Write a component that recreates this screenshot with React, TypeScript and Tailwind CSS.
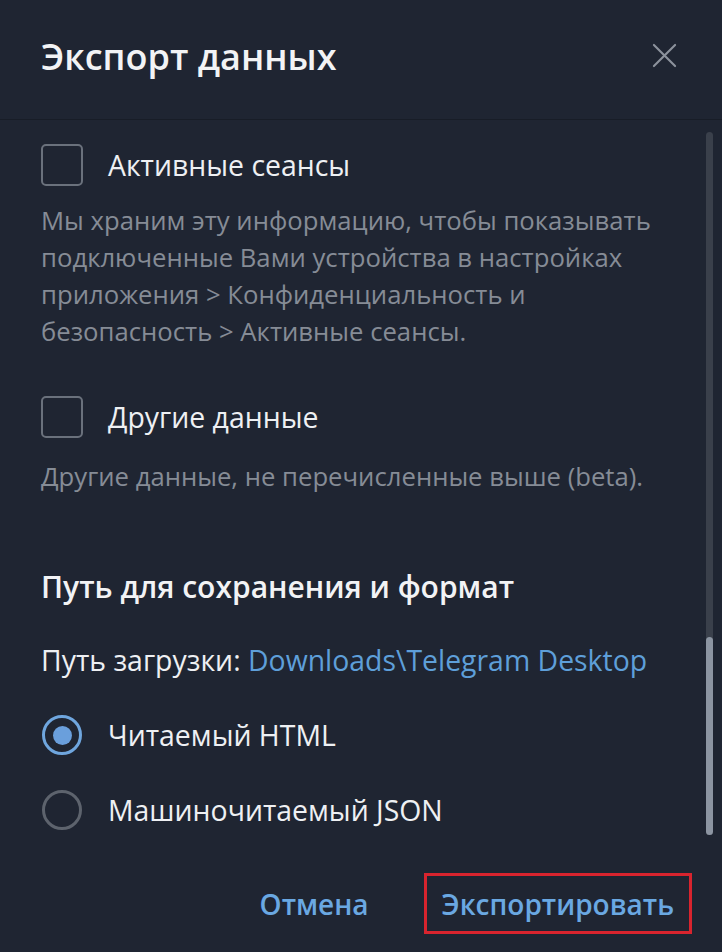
const Checkbox = ({ label }: { label: string }) => (
  <div className="flex h-[42px] items-center">
    <div className="size-[42px] shrink-0 rounded-[5px] border-2 border-[#6a717c]" />
    <span className="ml-[25px] text-[28.4px] leading-[36px] text-[#eef0f3]">{label}</span>
  </div>
);

const Radio = ({ label, checked }: { label: string; checked?: boolean }) => (
  <div className="flex h-[40px] items-center">
    <div
      className={
        checked
          ? 'flex size-[40px] shrink-0 items-center justify-center rounded-full border-[3px] border-[#6fa6de]'
          : 'flex size-[40px] shrink-0 items-center justify-center rounded-full border-[3px] border-[#5d636d]'
      }
    >
      {checked && <div className="size-[19px] rounded-full bg-[#6a9fdc]" />}
    </div>
    <span className="ml-[26px] text-[28.4px] leading-[36px] text-[#eef0f3]">{label}</span>
  </div>
);

const App = () => {
  return (
    <div
      className="h-[952px] w-[722px] overflow-hidden bg-[#1f2532]"
      style={{ fontFamily: '"Open Sans", "Noto Sans", sans-serif' }}
    >
      <header className="flex h-[120px] items-center justify-between border-b border-[#181d27] pl-[41px] pr-[45px]">
        <h1 className="-mt-[6px] text-[36px] font-semibold text-[#f2f3f5]">Экспорт данных</h1>
        <svg width="25" height="25" viewBox="0 0 26 26" className="-mt-[8px]">
          <path d="M2 2L24 24M24 2L2 24" stroke="#8c929c" strokeWidth="2.2" strokeLinecap="round" />
        </svg>
      </header>

      <div className="relative">
        <div className="absolute right-[9px] top-[12px] h-[703px] w-[7px] rounded-full bg-[#3a404b]">
          <div className="absolute bottom-0 h-[198px] w-[7px] rounded-full bg-[#8c95a2]" />
        </div>

        <div className="px-[41px] pt-[24px]">
          <Checkbox label="Активные сеансы" />
          <p className="mt-[16px] text-[25.7px] leading-[37px] text-[#868c96]">
            Мы храним эту информацию, чтобы показывать подключенные Вами устройства в настройках
            приложения &gt; Конфиденциальность и безопасность &gt; Активные сеансы.
          </p>

          <div className="mt-[46px]">
            <Checkbox label="Другие данные" />
          </div>
          <p className="mt-[20px] text-[25.7px] leading-[37px] text-[#868c96]">
            Другие данные, не перечисленные выше (beta).
          </p>

          <h2 className="mt-[74px] text-[30px] font-semibold leading-[36px] text-[#f2f3f5]">
            Путь для сохранения и формат
          </h2>
          <p className="mt-[37px] text-[28.4px] leading-[37px] text-[#eef0f3]">
            Путь загрузки: <span className="text-[#5e9fd9]">Downloads\Telegram Desktop</span>
          </p>

          <div className="mt-[36px] flex flex-col gap-[35px] pl-[1px]">
            <Radio label="Читаемый HTML" checked />
            <Radio label="Машиночитаемый JSON" />
          </div>
        </div>

        <div className="mt-[43px] flex items-center justify-end gap-[55px] pr-[30px]">
          <button className="text-[28px] font-semibold text-[#6aa8e2]">Отмена</button>
          <button className="flex h-[61px] items-center border-[3px] border-[#d8242e] px-[15px] text-[28px] font-semibold text-[#6aa8e2]">
            Экспортировать
          </button>
        </div>
      </div>
    </div>
  );
};

export default App;
